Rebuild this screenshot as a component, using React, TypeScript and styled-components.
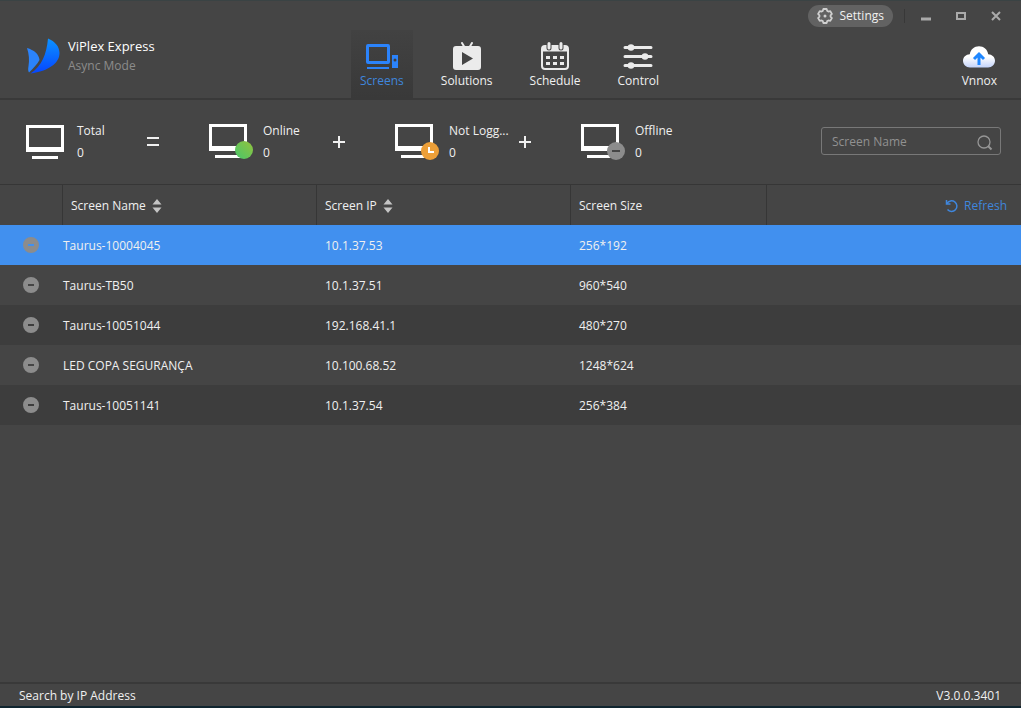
import React, { useState } from "react";
import styled, { createGlobalStyle } from "styled-components";

const GlobalStyle = createGlobalStyle`
  *, *::before, *::after { box-sizing: border-box; }
  html { background: #fff; }
  body { margin: 0; color: #f0f0f0; font: 12px/20px "Open Sans", "Noto Sans", sans-serif; }
  button, input { font: inherit; color: inherit; }
  button { background: none; border: 0; padding: 0; cursor: pointer; }
`;

const Page = styled.div`
  min-height: 100vh;
  display: flex;
  padding: 0 3px 12px 0;
`;

const Window = styled.div`
  flex: 1;
  min-width: 0;
  display: flex;
  flex-direction: column;
  background: #454545;
  border-top: 1px solid #3a4344;
  border-bottom: 2px solid #10252f;
`;

const TitleBar = styled.div`
  height: 29px;
  display: flex;
  align-items: center;
  justify-content: flex-end;
  padding-right: 16px;
`;

const SettingsButton = styled.button`
  display: flex;
  align-items: center;
  gap: 6px;
  height: 22px;
  padding: 0 9px 0 8px;
  border-radius: 11px;
  background: #626262;
`;

const Divider = styled.span`
  width: 1px;
  height: 14px;
  margin: 0 12px 0 11px;
  background: #383838;
`;

const WindowButtons = styled.div`
  display: flex;
  gap: 17px;
  color: #aaa;
`;

const WindowButton = styled.button`
  display: flex;
  width: 18px;
  height: 18px;
`;

const Header = styled.header`
  display: flex;
  justify-content: space-between;
  height: 70px;
  padding: 0 15px 0 24px;
  border-bottom: 2px solid #393939;
`;

const Brand = styled.div`
  display: flex;
  gap: 8px;
  width: 327px;
  padding-top: 6px;
`;

const BrandLogo = styled.svg`
  margin-top: 2px;
`;

const BrandName = styled.h1`
  margin: 0;
  font-size: 13px;
  line-height: 20px;
  font-weight: 400;
  color: #fff;
`;

const BrandMode = styled.div`
  line-height: 20px;
  color: #8c8c8c;
`;

const Nav = styled.nav`
  display: flex;
  gap: 19px;
  flex: 1;
`;

const NavButton = styled.button<{ $active?: boolean }>`
  display: flex;
  flex-direction: column;
  align-items: center;
  padding: 12px 9px 0;
  color: ${(p) => (p.$active ? "#3f86dc" : "#f0f0f0")};
  background: ${(p) => (p.$active ? "linear-gradient(#424242, #393939)" : "none")};
`;

const Summary = styled.section`
  display: flex;
  align-items: center;
  justify-content: space-between;
  height: 84px;
  padding: 0 20px 0 25px;
`;

const Equation = styled.div`
  display: flex;
  align-items: center;
`;

const Stat = styled.div<{ $badged: boolean }>`
  display: flex;
  gap: ${(p) => (p.$badged ? "10px" : "7px")};
  width: ${(p) => (p.$badged ? "116px" : "113px")};
`;

const StatText = styled.div`
  display: flex;
  flex-direction: column;
  gap: 2px;
  white-space: nowrap;
`;

const Operator = styled.svg`
  margin: 0 46px 0 6px;
  width: 18px;
`;

const SearchBox = styled.label`
  display: flex;
  align-items: center;
  width: 180px;
  height: 28px;
  margin-bottom: 2px;
  padding: 2px 7px 0 10px;
  border: 1px solid #787878;
  border-radius: 3px;
`;

const SearchInput = styled.input`
  flex: 1;
  min-width: 0;
  padding: 0;
  border: 0;
  outline: 0;
  background: none;
  &::placeholder { color: #919191; opacity: 1; }
`;

const ScreenTable = styled.table`
  width: 100%;
  table-layout: fixed;
  border-collapse: separate;
  border-spacing: 0;
  text-align: left;
`;

const Column = styled.col<{ $width?: number }>`
  width: ${(p) => (p.$width ? `${p.$width}px` : "auto")};
`;

const HeadCell = styled.th`
  height: 41px;
  padding: 1px 8px 0;
  border-top: 1px solid #363636;
  border-right: 1px solid #363636;
  font-weight: 400;
  &:last-child { padding-right: 14px; border-right: 0; }
`;

const SortButton = styled.button`
  display: flex;
  align-items: center;
  gap: 6px;
`;

const RefreshButton = styled.button`
  display: flex;
  align-items: center;
  gap: 5px;
  margin-left: auto;
  color: #3f86dc;
`;

const Row = styled.tr<{ $selected: boolean }>`
  background: ${(p) => (p.$selected ? "#4190ef" : "transparent")};
  &:nth-child(odd) { background: ${(p) => (p.$selected ? "#4190ef" : "#3d3d3d")}; }
`;

const Cell = styled.td<{ $flush?: boolean }>`
  height: 40px;
  padding: 1px 0 0 ${(p) => (p.$flush ? "0" : "8px")};
`;

const StatusCell = styled(Cell)`
  padding: 0 0 0 23px;
  line-height: 0;
`;

const Footer = styled.footer`
  display: flex;
  justify-content: space-between;
  margin-top: auto;
  height: 24px;
  padding: 2px 20px 0 19px;
  border-top: 2px solid #393939;
`;

const FooterButton = styled.button`
  height: 20px;
`;

function gearOutline(center: number, outer: number, inner: number) {
  const points: string[] = [];
  for (let tooth = 0; tooth < 6; tooth++) {
    const corners = [[-23, inner], [-13, outer], [13, outer], [23, inner]];
    for (const [offset, radius] of corners) {
      const angle = ((tooth * 60 + offset) * Math.PI) / 180;
      points.push(`${(center + radius * Math.sin(angle)).toFixed(2)} ${(center - radius * Math.cos(angle)).toFixed(2)}`);
    }
  }
  return `M${points.join("L")}Z`;
}

function GearIcon() {
  return (
    <svg width="18" height="18" viewBox="0 0 18 18" aria-hidden="true">
      <path d={gearOutline(9, 7.2, 5.6)} fill="none" stroke="#d0d0d0" strokeWidth="1.8" strokeLinejoin="round" />
      <circle cx="9" cy="9" r="1.5" fill="#d0d0d0" />
    </svg>
  );
}

function ScreensIcon() {
  return (
    <svg width="34" height="29" viewBox="0 0 34 29" fill="#2b83fb" aria-hidden="true">
      <path fillRule="evenodd" d="M3 2h20a2 2 0 0 1 2 2v16a2 2 0 0 1-2 2H3a2 2 0 0 1-2-2V4a2 2 0 0 1 2-2zm1 3v14h18V5zM27 13h6v13h-6zm3 3.500a1.500 1.500 0 1 0 0 3 1.500 1.500 0 0 0 0-3z" />
      <rect x="2" y="25" width="22" height="2" />
    </svg>
  );
}

function SolutionsIcon() {
  return (
    <svg width="34" height="29" viewBox="0 0 34 29" fill="#ebebeb" aria-hidden="true">
      <path d="M12 1l3 5M22 1l-3 5" stroke="#ebebeb" strokeWidth="2" strokeLinecap="round" />
      <path fillRule="evenodd" d="M6 4h22a3 3 0 0 1 3 3v18a3 3 0 0 1-3 3H6a3 3 0 0 1-3-3V7a3 3 0 0 1 3-3zm6 6v13l11-6.500z" />
    </svg>
  );
}

function ScheduleIcon() {
  const dots = [8, 15, 22].flatMap((x) => [14, 20].map((y) => [x, y]));
  return (
    <svg width="34" height="29" viewBox="0 0 34 29" fill="none" stroke="#ebebeb" aria-hidden="true">
      <rect x="4" y="4" width="26" height="23" rx="3" strokeWidth="2" />
      <path d="M4 7h26" strokeWidth="5" />
      <path d="M11 1v5M23 1v5" stroke="#454545" strokeWidth="5" strokeLinecap="round" />
      <path d="M11 1.500v4.500M23 1.500v4.500" strokeWidth="3" strokeLinecap="round" />
      {dots.map(([x, y]) => (
        <rect key={`${x}-${y}`} x={x} y={y} width="4" height="3" fill="#ebebeb" stroke="none" />
      ))}
    </svg>
  );
}

function ControlIcon() {
  return (
    <svg width="34" height="29" viewBox="0 0 34 29" fill="#ebebeb" stroke="#ebebeb" strokeWidth="3" strokeLinecap="round" aria-hidden="true">
      <path d="M4 5.500h26M4 14.500h26M4 23.500h26" />
      <g stroke="none">
        <circle cx="10" cy="5.500" r="3.300" />
        <circle cx="24" cy="14.500" r="3.300" />
        <circle cx="10" cy="23.500" r="3.300" />
      </g>
    </svg>
  );
}

function CloudIcon() {
  return (
    <svg width="34" height="29" viewBox="0 0 34 29" aria-hidden="true">
      <defs>
        <linearGradient id="cloud" x1="0" y1="0" x2="0" y2="1">
          <stop offset="0.5" stopColor="#fff" />
          <stop offset="1" stopColor="#c3d3fa" />
        </linearGradient>
      </defs>
      <path fill="url(#cloud)" d="M8 25.500C4 25.500 1 22.500 1 18.800c0-3.800 3-6.500 6.800-6.600C8.500 7.500 12.300 4.300 17 4.300s8.500 3.200 9.200 7.900c3.800.1 6.800 2.800 6.800 6.600 0 3.700-3 6.700-7 6.700z" />
      <path d="M17 23V12M12 17l5-5 5 5" fill="none" stroke="#1f87ff" strokeWidth="3" />
    </svg>
  );
}

type Status = "online" | "pending" | "offline";

function MonitorIcon({ status }: { status?: Status }) {
  return (
    <svg width="45" height="40" viewBox={status ? "0 0 45 40" : "0 -1 45 40"} aria-hidden="true">
      <defs>
        <linearGradient id="online" x1="0" y1="1" x2="1" y2="0">
          <stop offset="0" stopColor="#47c76b" />
          <stop offset="1" stopColor="#94c23c" />
        </linearGradient>
      </defs>
      <path fill="#fff" fillRule="evenodd" d="M1 3h38v27H1zm3 3v19h32V6z" />
      <rect x="7" y="34" width="26" height="3" fill="#fff" />
      {status === "online" && <circle cx="36" cy="29" r="9" fill="url(#online)" />}
      {status === "pending" && (
        <>
          <circle cx="36" cy="30" r="9" fill="#ec9f38" />
          <path d="M35 26v5h5" fill="none" stroke="#fff" strokeWidth="2" />
        </>
      )}
      {status === "offline" && (
        <>
          <circle cx="36" cy="30" r="9" fill="#8c8c8c" />
          <path d="M32 30h8" stroke="#454545" strokeWidth="2" />
        </>
      )}
    </svg>
  );
}

function SortIcon() {
  return (
    <svg width="10" height="14" viewBox="0 0 10 14" fill="#c4c4c4" aria-hidden="true">
      <path d="M5 0l4.500 5.500h-9zM5 14L.5 8.500h9z" />
    </svg>
  );
}

const stats: { label: string; count: number; status?: Status; operator?: string }[] = [
  { label: "Total", count: 0, operator: "M3 5h12M3 12h12" },
  { label: "Online", count: 0, status: "online", operator: "M3 9h12M9 3v12" },
  { label: "Not Logg...", count: 0, status: "pending", operator: "M3 9h12M9 3v12" },
  { label: "Offline", count: 0, status: "offline" },
];

const screens = [
  { name: "Taurus-10004045", ip: "10.1.37.53", size: "256*192" },
  { name: "Taurus-TB50", ip: "10.1.37.51", size: "960*540" },
  { name: "Taurus-10051044", ip: "192.168.41.1", size: "480*270" },
  { name: "LED COPA SEGURANÇA", ip: "10.100.68.52", size: "1248*624" },
  { name: "Taurus-10051141", ip: "10.1.37.54", size: "256*384" },
];

const tabs = [
  { label: "Screens", Icon: ScreensIcon },
  { label: "Solutions", Icon: SolutionsIcon },
  { label: "Schedule", Icon: ScheduleIcon },
  { label: "Control", Icon: ControlIcon },
];

export default function App() {
  const [tab, setTab] = useState("Screens");
  const [selected, setSelected] = useState(0);
  return (
    <Page>
      <GlobalStyle />
      <Window>
        <TitleBar>
          <SettingsButton>
            <GearIcon />
            Settings
          </SettingsButton>
          <Divider />
          <WindowButtons>
            <WindowButton aria-label="Minimize">
              <svg width="18" height="18" viewBox="0 0 18 18"><path d="M4 12h10" stroke="currentColor" strokeWidth="3" /></svg>
            </WindowButton>
            <WindowButton aria-label="Maximize">
              <svg width="18" height="18" viewBox="0 0 18 18"><rect x="5" y="6" width="8" height="6" fill="none" stroke="currentColor" strokeWidth="2" /></svg>
            </WindowButton>
            <WindowButton aria-label="Close">
              <svg width="18" height="18" viewBox="0 0 18 18"><path d="M5 5l8 8M13 5l-8 8" stroke="currentColor" strokeWidth="2" /></svg>
            </WindowButton>
          </WindowButtons>
        </TitleBar>

        <Header>
          <Brand>
            <BrandLogo width="36" height="38" viewBox="0 0 36 38" aria-hidden="true">
              <defs>
                <linearGradient id="wing" x1="0" y1="0" x2="0" y2="1">
                  <stop offset="0" stopColor="#0c93ff" />
                  <stop offset="1" stopColor="#0645ff" />
                </linearGradient>
              </defs>
              <path fill="url(#wing)" d="M24 .5c7 3 11.500 8 11.500 14.500C35.500 25 25 33 6.500 35.500 18 28 22.500 16 24 .5z" />
              <path fill="#2b83fb" d="M3 10c7 2 12 6 12.500 12-2 4-6 8-10.500 12.500C4 33 4 31 4.500 28 5.500 22 5 16 3 10z" />
            </BrandLogo>
            <div>
              <BrandName>ViPlex Express</BrandName>
              <BrandMode>Async Mode</BrandMode>
            </div>
          </Brand>
          <Nav>
            {tabs.map(({ label, Icon }) => (
              <NavButton key={label} $active={label === tab} onClick={() => setTab(label)}>
                <Icon />
                {label}
              </NavButton>
            ))}
          </Nav>
          <NavButton>
            <CloudIcon />
            Vnnox
          </NavButton>
        </Header>

        <Summary>
          <Equation>
            {stats.map(({ label, count, status, operator }) => (
              <React.Fragment key={label}>
                <Stat $badged={status !== undefined}>
                  <MonitorIcon status={status} />
                  <StatText>
                    <span>{label}</span>
                    <span>{count}</span>
                  </StatText>
                </Stat>
                {operator && (
                  <Operator width="18" height="18" viewBox="0 0 18 18" stroke="#f0f0f0" strokeWidth="2" aria-hidden="true">
                    <path d={operator} />
                  </Operator>
                )}
              </React.Fragment>
            ))}
          </Equation>
          <SearchBox>
            <SearchInput type="text" placeholder="Screen Name" aria-label="Screen Name" />
            <svg width="18" height="18" viewBox="0 0 18 18" fill="none" stroke="#969696" aria-hidden="true">
              <circle cx="9" cy="9" r="6" strokeWidth="1.300" />
              <path d="M13 13l3.500 3.500" strokeWidth="2" />
            </svg>
          </SearchBox>
        </Summary>

        <ScreenTable>
          <colgroup>
            <Column $width={63} />
            <Column $width={254} />
            <Column $width={254} />
            <Column $width={196} />
            <Column />
          </colgroup>
          <thead>
            <tr>
              <HeadCell />
              <HeadCell><SortButton>Screen Name <SortIcon /></SortButton></HeadCell>
              <HeadCell><SortButton>Screen IP <SortIcon /></SortButton></HeadCell>
              <HeadCell>Screen Size</HeadCell>
              <HeadCell>
                <RefreshButton>
                  <svg width="14" height="14" viewBox="0 0 14 14" fill="none" stroke="currentColor" strokeWidth="1.500" aria-hidden="true">
                    <path d="M1.500 1v4h4M2 4.500A5.300 5.300 0 1 1 2.500 10.500" />
                  </svg>
                  Refresh
                </RefreshButton>
              </HeadCell>
            </tr>
          </thead>
          <tbody>
            {screens.map(({ name, ip, size }, index) => (
              <Row key={name} $selected={index === selected} onClick={() => setSelected(index)}>
                <StatusCell $flush>
                  <svg width="16" height="16" viewBox="0 0 16 16" role="img" aria-label="Offline">
                    <path fill="#8c8c8c" fillRule="evenodd" d="M8 0a8 8 0 1 1 0 16A8 8 0 0 1 8 0zM5 7v2h6V7z" />
                  </svg>
                </StatusCell>
                <Cell $flush>{name}</Cell>
                <Cell>{ip}</Cell>
                <Cell>{size}</Cell>
                <Cell />
              </Row>
            ))}
          </tbody>
        </ScreenTable>

        <Footer>
          <FooterButton>Search by IP Address</FooterButton>
          <span>V3.0.0.3401</span>
        </Footer>
      </Window>
    </Page>
  );
}
